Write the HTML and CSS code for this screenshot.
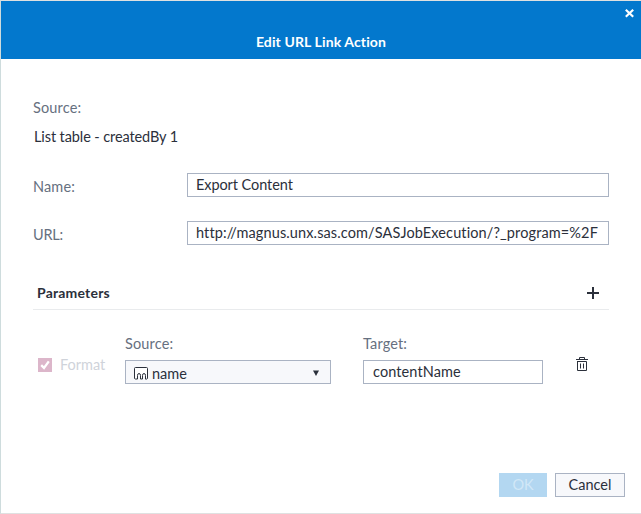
FILE: index.html
```html
<!DOCTYPE html>
<html lang="en">
<head>
<meta charset="utf-8">
<title>Edit URL Link Action</title>
<link rel="stylesheet" href="styles.css">
</head>
<body>
<div class="dialog">
  <header class="titlebar">
    <svg class="close" width="9" height="9" viewBox="0 0 9 9"><path d="M.8 .8L8.2 7.7M8.2 .8L.8 7.7"/></svg>
    <h1 class="title">Edit URL Link Action</h1>
  </header>
  <main class="content">
    <div class="label">Source:</div>
    <div class="value">List table - createdBy 1</div>
    <div class="field name-field">
      <div class="label">Name:</div>
      <div class="input">Export Content</div>
    </div>
    <div class="field url-field">
      <div class="label url-label">URL:</div>
      <div class="input url-input">http://magnus.unx.sas.com/SASJobExecution/?_program=%2F</div>
    </div>
    <div class="section">
      <h2>Parameters</h2>
      <svg class="plus" width="12" height="12" viewBox="0 0 12 12"><path d="M6 0V12M0 6H12"/></svg>
    </div>
    <div class="parameter">
      <div class="format">
        <svg width="14" height="14" viewBox="0 0 14 14"><rect width="14" height="14" fill="#dcb6ca"/><path d="M3.2 7.2L6 9.9L10.8 3.4" fill="none" stroke="#fff" stroke-width="2.3"/></svg>
        <span>Format</span>
      </div>
      <div class="source">
        <div class="label">Source:</div>
        <div class="select">
          <svg width="14" height="13" viewBox="0 0 14 13"><path d="M.5 11.5V1.5Q.5 .5 1.5 .5H12.5Q13.5 .5 13.5 1.5V11.5L12.5 12.1H11.5V8.5Q11.5 6.5 10 6.5Q8.5 6.5 8.5 8.5V12H6.5V8.5Q6.5 6.5 5 6.5Q3.5 6.5 3.5 8.5V12H1.5Z" fill="#fff" stroke="#2b303b"/></svg>
          <span>name</span>
          <svg class="arrow" width="6" height="6" viewBox="0 0 6 6"><path d="M0 .5H6L3 6Z" fill="#2b303b"/></svg>
        </div>
      </div>
      <div class="target">
        <div class="label">Target:</div>
        <div class="input">contentName</div>
      </div>
      <svg class="trash" width="12" height="14" viewBox="0 0 12 14"><path d="M0 2.5H12M3.5 2.5V.5H8.5V2.5M1.5 4V13.5H10.5V4.5H1.5M4.5 6.5V11.5M7.5 6.5V11.5" fill="none" stroke="#2b303b"/></svg>
    </div>
    <footer class="actions">
      <div class="button primary">OK</div>
      <div class="button">Cancel</div>
    </footer>
  </main>
</div>
</body>
</html>
```
FILE: styles.css
```css
* { box-sizing: border-box; }
body {
  margin: 0;
  background: #fff;
  color: #2b303b;
  font: 14.5px/20px Lato, "Liberation Sans", sans-serif;
  font-variant-ligatures: none;
  white-space: nowrap;
  overflow: hidden;
}
svg { display: block; flex: none; }
.dialog {
  height: 514px;
  border: 1px solid #dfe1e1;
  border-left-color: #cedcdd;
  border-right: 0;
  display: flex;
  flex-direction: column;
}
.titlebar {
  height: 58px;
  flex: none;
  background: #0378cd;
  color: #fff;
  display: flex;
  flex-direction: column;
  align-items: center;
}
.close { align-self: flex-end; margin: 8px 7px 0 0; fill: none; stroke: #fff; stroke-width: 2.2; }
.title { margin: 14px 0 0; font-size: 14px; line-height: 20px; font-weight: 700; letter-spacing: .12px; }
.content { padding: 39px 32px 0; flex: 1; display: flex; flex-direction: column; }
.label { color: #667080; letter-spacing: .15px; }
.value { margin: 9px 0 0 1px; letter-spacing: -.1px; }
.field { display: flex; height: 24px; width: 576px; }
.field .label { width: 154px; padding-top: 4px; flex: none; }
.field .url-label { letter-spacing: -.2px; }
.field .input { flex: 1; letter-spacing: -.08px; }
.field .url-input { letter-spacing: .12px; }
.name-field { margin-top: 26px; }
.url-field { margin-top: 24px; }
.input {
  height: 24px;
  border: 1px solid #aab3c3;
  padding: 0 8px;
  line-height: 22px;
  background: #fff;
}
.section {
  width: 576px;
  height: 33px;
  margin-top: 32px;
  border-bottom: 1px solid #e9ebed;
  display: flex;
  align-items: center;
  justify-content: space-between;
  padding: 0 10px 0 4px;
}
.section h2 { margin: 0; font-size: 14px; font-weight: 700; letter-spacing: .2px; }
.plus { stroke: #2b303b; stroke-width: 2; }
.parameter { display: flex; margin-top: 24px; }
.format { width: 92px; padding: 20px 0 0 5px; height: 42px; display: flex; align-items: center; gap: 8px; color: #cfd3da; }
.source { width: 206px; }
.source .select, .target .input { margin-top: 6px; }
.target .input { letter-spacing: .1px; padding-left: 9px; }
.select {
  height: 24px;
  border: 1px solid #aab3c3;
  background: #f7f8fb;
  display: flex;
  align-items: center;
  padding: 3px 11px 0 8px;
}
.select span { margin-left: 4px; }
.arrow { margin: 0 0 1px auto; }
.target { width: 180px; margin-left: 32px; }
.trash { margin: 23px 0 0 33px; }
.actions { display: flex; gap: 8px; margin: 89px 0 0 466px; }
.button {
  flex: none;
  width: 70px;
  height: 24px;
  border: 1px solid #aab3c3;
  background: #f7f8fb;
  text-align: center;
  line-height: 22px;
}
.primary { width: 48px; background: #b3d7f1; border-color: #b3d7f1; color: #d1e7f7; }
```
